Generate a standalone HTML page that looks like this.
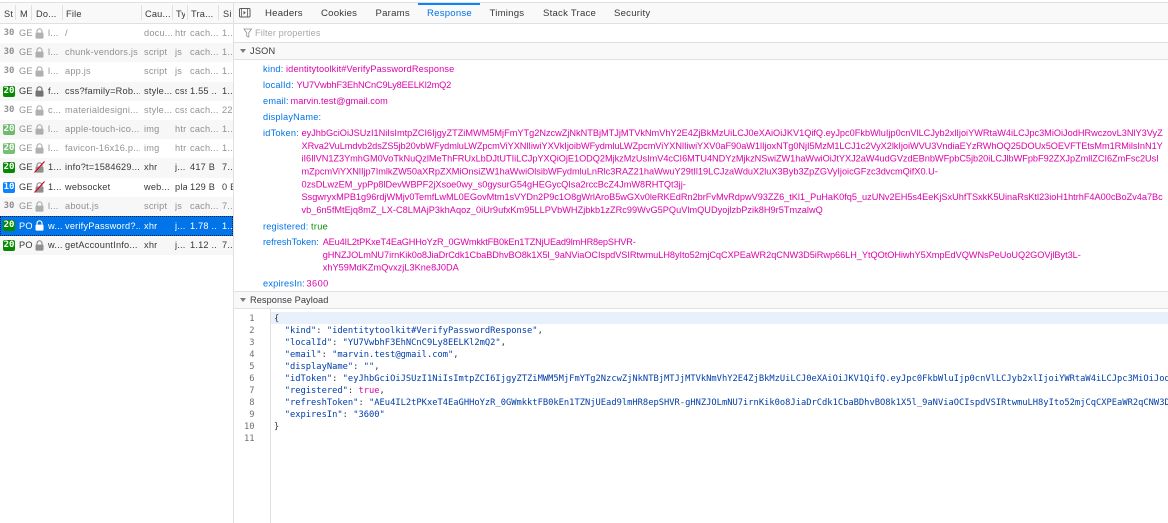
<!DOCTYPE html>
<html><head><meta charset="utf-8"><style>
html,body{margin:0;padding:0;background:#fff;width:1168px;height:523px;overflow:hidden}
#p{position:relative;width:1168px;height:523px;overflow:hidden;font:9.2px/1 "Liberation Sans",sans-serif;letter-spacing:.22px;color:#38383d}
.a{position:absolute}
.b{position:absolute;background:#e0e0e2}
.h{position:absolute;top:8px;white-space:nowrap;overflow:hidden;line-height:12px;color:#38383d}
.r{position:absolute;left:0;width:233px;height:19.2px;line-height:19.2px;white-space:nowrap;color:#38383d}
.r.alt{background:#f7f7f7}
.r.g>span,.r.g>svg{opacity:.55}
.r span{position:absolute;top:0;overflow:hidden;height:19.2px}
.s{left:3px;width:12px;font:bold 9px/11px "DejaVu Sans Mono",monospace;letter-spacing:0;color:#fff;top:4px!important;height:11px!important;text-align:center;border-radius:2px;background:#058b00}
.s.n{background:none;color:#38383d}
.s.i{background:#0a84ff}
.m{left:19px;width:14px}.d{left:48px;width:14px}.f{left:65px;width:75px}.c{left:144px;width:28px}.t{left:175px;width:12px}.x{left:190px;width:28px}.z{left:222px;width:11px}
.l{position:absolute;left:35px;top:4px}
.sel{background:#0074e8;color:#fff;outline:1px dotted #00224f;outline-offset:-1px}
.tab{position:absolute;top:7px;line-height:13px;font-size:9.6px;color:#38383d;white-space:nowrap}
svg text{font-family:"Liberation Sans",sans-serif;font-size:9.2px}
.k{fill:#0074e8}.v{fill:#dd00a9}
.mono text{font-family:"DejaVu Sans Mono",monospace;font-size:8.75px;fill:#003eaa;letter-spacing:0}
</style></head><body><div id="p">

<div class="a" style="left:0;top:3px;width:1168px;height:20px;background:#f9f9fa"></div>
<div class="b" style="left:0;top:2px;width:1168px;height:1px"></div>
<div class="b" style="left:0;top:23px;width:1168px;height:1px"></div>

<div class="h" style="left:4px;width:10px">St</div>
<div class="h" style="left:20px;width:10px">M</div>
<div class="h" style="left:36px;width:24px">Do...</div>
<div class="h" style="left:66px;width:70px">File</div>
<div class="h" style="left:145px;width:25px">Cau...</div>
<div class="h" style="left:176px;width:9px">Ty</div>
<div class="h" style="left:191px;width:25px">Tra...</div>
<div class="h" style="left:223px;width:9px">Si</div>
<div class="b" style="left:15px;top:5px;width:1px;height:15px"></div>
<div class="b" style="left:31px;top:5px;width:1px;height:15px"></div>
<div class="b" style="left:62px;top:5px;width:1px;height:15px"></div>
<div class="b" style="left:141px;top:5px;width:1px;height:15px"></div>
<div class="b" style="left:172px;top:5px;width:1px;height:15px"></div>
<div class="b" style="left:187px;top:5px;width:1px;height:15px"></div>
<div class="b" style="left:218px;top:5px;width:1px;height:15px"></div>

<div class="r g" style="top:24px"><span class="s n">30</span><span class="m">GE</span><svg class="l" width="9" height="11" viewBox="0 0 9 11"><path d="M2 5V3.3a2.5 2.5 0 0 1 5 0V5" fill="none" stroke="#737373" stroke-width="1.2"/><rect x=".5" y="4.6" width="8" height="6" rx="1" fill="#737373"/></svg><span class="d">l...</span><span class="f">/</span><span class="c">docu...</span><span class="t">htr</span><span class="x">cach...</span><span class="z">1...</span></div>
<div class="r g alt" style="top:43.2px"><span class="s n">30</span><span class="m">GE</span><svg class="l" width="9" height="11" viewBox="0 0 9 11"><path d="M2 5V3.3a2.5 2.5 0 0 1 5 0V5" fill="none" stroke="#737373" stroke-width="1.2"/><rect x=".5" y="4.6" width="8" height="6" rx="1" fill="#737373"/></svg><span class="d">l...</span><span class="f">chunk-vendors.js</span><span class="c">script</span><span class="t">js</span><span class="x">cach...</span><span class="z">1...</span></div>
<div class="r g" style="top:62.4px"><span class="s n">30</span><span class="m">GE</span><svg class="l" width="9" height="11" viewBox="0 0 9 11"><path d="M2 5V3.3a2.5 2.5 0 0 1 5 0V5" fill="none" stroke="#737373" stroke-width="1.2"/><rect x=".5" y="4.6" width="8" height="6" rx="1" fill="#737373"/></svg><span class="d">l...</span><span class="f">app.js</span><span class="c">script</span><span class="t">js</span><span class="x">cach...</span><span class="z">1...</span></div>
<div class="r alt" style="top:81.6px"><span class="s">20</span><span class="m">GE</span><svg class="l" width="9" height="11" viewBox="0 0 9 11"><path d="M2 5V3.3a2.5 2.5 0 0 1 5 0V5" fill="none" stroke="#737373" stroke-width="1.2"/><rect x=".5" y="4.6" width="8" height="6" rx="1" fill="#737373"/></svg><span class="d">f...</span><span class="f">css?family=Rob...</span><span class="c">style...</span><span class="t">css</span><span class="x">1.55 ...</span><span class="z">1...</span></div>
<div class="r g" style="top:100.8px"><span class="s n">30</span><span class="m">GE</span><svg class="l" width="9" height="11" viewBox="0 0 9 11"><path d="M2 5V3.3a2.5 2.5 0 0 1 5 0V5" fill="none" stroke="#737373" stroke-width="1.2"/><rect x=".5" y="4.6" width="8" height="6" rx="1" fill="#737373"/></svg><span class="d">c...</span><span class="f">materialdesigni...</span><span class="c">style...</span><span class="t">css</span><span class="x">cach...</span><span class="z">22</span></div>
<div class="r g alt" style="top:120px"><span class="s">20</span><span class="m">GE</span><svg class="l" width="9" height="11" viewBox="0 0 9 11"><path d="M2 5V3.3a2.5 2.5 0 0 1 5 0V5" fill="none" stroke="#737373" stroke-width="1.2"/><rect x=".5" y="4.6" width="8" height="6" rx="1" fill="#737373"/></svg><span class="d">l...</span><span class="f">apple-touch-ico...</span><span class="c">img</span><span class="t">htr</span><span class="x">cach...</span><span class="z">1...</span></div>
<div class="r g" style="top:139.2px"><span class="s">20</span><span class="m">GE</span><svg class="l" width="9" height="11" viewBox="0 0 9 11"><path d="M2 5V3.3a2.5 2.5 0 0 1 5 0V5" fill="none" stroke="#737373" stroke-width="1.2"/><rect x=".5" y="4.6" width="8" height="6" rx="1" fill="#737373"/></svg><span class="d">l...</span><span class="f">favicon-16x16.p...</span><span class="c">img</span><span class="t">htr</span><span class="x">cach...</span><span class="z">1...</span></div>
<div class="r alt" style="top:158.4px"><span class="s">20</span><span class="m">GE</span><svg class="l" width="11" height="12" viewBox="0 0 11 12" style="left:34px;top:3px"><path d="M3 6V4.3a2.5 2.5 0 0 1 5 0V6" fill="none" stroke="#8f8f8f" stroke-width="1.2"/><rect x="1.500" y="5.600" width="8" height="6" rx="1" fill="#8f8f8f"/><path d="M.5 11.500L10.500.5" stroke="#d70022" stroke-width="1.2"/></svg><span class="d">1...</span><span class="f">info?t=1584629...</span><span class="c">xhr</span><span class="t">j...</span><span class="x">417 B</span><span class="z">7...</span></div>
<div class="r" style="top:177.6px"><span class="s i">10</span><span class="m">GE</span><svg class="l" width="11" height="12" viewBox="0 0 11 12" style="left:34px;top:3px"><path d="M3 6V4.3a2.5 2.5 0 0 1 5 0V6" fill="none" stroke="#8f8f8f" stroke-width="1.2"/><rect x="1.500" y="5.600" width="8" height="6" rx="1" fill="#8f8f8f"/><path d="M.5 11.500L10.500.5" stroke="#d70022" stroke-width="1.2"/></svg><span class="d">1...</span><span class="f">websocket</span><span class="c">web...</span><span class="t">pla</span><span class="x">129 B</span><span class="z">0 B</span></div>
<div class="r g alt" style="top:196.8px"><span class="s n">30</span><span class="m">GE</span><svg class="l" width="9" height="11" viewBox="0 0 9 11"><path d="M2 5V3.3a2.5 2.5 0 0 1 5 0V5" fill="none" stroke="#737373" stroke-width="1.2"/><rect x=".5" y="4.6" width="8" height="6" rx="1" fill="#737373"/></svg><span class="d">l...</span><span class="f">about.js</span><span class="c">script</span><span class="t">js</span><span class="x">cach...</span><span class="z">7...</span></div>
<div class="r sel" style="top:216px;height:20px;line-height:20px"><span class="s">20</span><span class="m">PO</span><svg class="l" width="9" height="11" viewBox="0 0 9 11"><path d="M2 5V3.3a2.5 2.5 0 0 1 5 0V5" fill="none" stroke="#fff" stroke-width="1.2"/><rect x=".5" y="4.6" width="8" height="6" rx="1" fill="#fff"/></svg><span class="d">w...</span><span class="f">verifyPassword?...</span><span class="c">xhr</span><span class="t">j...</span><span class="x">1.78 ...</span><span class="z">1...</span></div>
<div class="r alt" style="top:236px;line-height:19px"><span class="s">20</span><span class="m">PO</span><svg class="l" width="9" height="11" viewBox="0 0 9 11"><path d="M2 5V3.3a2.5 2.5 0 0 1 5 0V5" fill="none" stroke="#8f8f8f" stroke-width="1.2"/><rect x=".5" y="4.6" width="8" height="6" rx="1" fill="#8f8f8f"/></svg><span class="d">w...</span><span class="f">getAccountInfo...</span><span class="c">xhr</span><span class="t">j...</span><span class="x">1.12 ...</span><span class="z">7...</span></div>

<div class="b" style="left:233px;top:2px;width:1px;height:521px"></div>

<svg class="a" style="left:239px;top:7px" width="12" height="12" viewBox="0 0 12 12"><rect x=".5" y="1.500" width="10.500" height="8.500" rx="1" fill="none" stroke="#5b5b60"/><path d="M2.500 1.500v8.500M8.500 1.500v8.500" stroke="#5b5b60" stroke-width=".8"/><path d="M4.500 3.700l2.300 2-2.300 2z" fill="#5b5b60"/></svg>
<div class="tab" style="left:265px">Headers</div>
<div class="tab" style="left:321px">Cookies</div>
<div class="tab" style="left:375.500px">Params</div>
<div class="tab" style="left:427px;color:#0074e8">Response</div>
<div class="tab" style="left:489.500px">Timings</div>
<div class="tab" style="left:543px">Stack Trace</div>
<div class="tab" style="left:614px">Security</div>
<div class="a" style="left:418px;top:3px;width:62px;height:2px;background:#0a84ff"></div>

<svg class="a" style="left:243px;top:28px" width="10" height="10" viewBox="0 0 10 10"><path d="M1 1h7.500L5.800 4.800V9L3.700 8V4.800z" fill="none" stroke="#8f8f93" stroke-width=".8"/></svg>
<div class="a" style="left:255px;top:27px;line-height:13px;color:#a8a8ac;letter-spacing:.1px">Filter properties</div>
<div class="b" style="left:234px;top:42px;width:934px;height:1px"></div>
<div class="a" style="left:234px;top:43px;width:934px;height:16px;background:#f9f9fa"></div>
<div class="b" style="left:234px;top:59px;width:934px;height:1px"></div>
<svg class="a" style="left:240px;top:49px" width="7" height="5"><path d="M0 0h6L3 4z" fill="#7a7a7f"/></svg>
<div class="a" style="left:250px;top:45px;line-height:13px">JSON</div>

<svg class="a" style="left:0;top:0" width="1168" height="523">
<text class="k" x="263" y="72.200">kind:</text><text class="v" x="286" y="72.200" textLength="168.500">identitytoolkit#VerifyPasswordResponse</text>
<text class="k" x="263" y="88.200">localId:</text><text class="v" x="296.500" y="88.200" textLength="155">YU7VwbhF3EhNCnC9Ly8EELKl2mQ2</text>
<text class="k" x="263" y="104.200">email:</text><text class="v" x="290.500" y="104.200" textLength="97.500">marvin.test@gmail.com</text>
<text class="k" x="263" y="120.200">displayName:</text>
<text class="k" x="263" y="136.200">idToken:</text>
<text class="v" x="301.500" y="136" textLength="861.500">eyJhbGciOiJSUzI1NiIsImtpZCI6IjgyZTZiMWM5MjFmYTg2NzcwZjNkNTBjMTJjMTVkNmVhY2E4ZjBkMzUiLCJ0eXAiOiJKV1QifQ.eyJpc0FkbWluIjp0cnVlLCJyb2xlIjoiYWRtaW4iLCJpc3MiOiJodHRwczovL3NlY3VyZ</text>
<text class="v" x="301.500" y="149" textLength="861.500">XRva2VuLmdvb2dsZS5jb20vbWFydmluLWZpcmViYXNlIiwiYXVkIjoibWFydmluLWZpcmViYXNlIiwiYXV0aF90aW1lIjoxNTg0NjI5MzM1LCJ1c2VyX2lkIjoiWVU3VndiaEYzRWhOQ25DOUx5OEVFTEtsMm1RMilsInN1Y</text>
<text class="v" x="301.500" y="161.700" textLength="857.500">iI6IlVN1Z3YmhGM0VoTkNuQzlMeThFRUxLbDJtUTIiLCJpYXQiOjE1ODQ2MjkzMzUsImV4cCI6MTU4NDYzMjkzNSwiZW1haWwiOiJtYXJ2aW4udGVzdEBnbWFpbC5jb20iLCJlbWFpbF92ZXJpZmllZCI6ZmFsc2UsI</text>
<text class="v" x="301.500" y="174.500" textLength="636.500">mZpcmViYXNlIjp7ImlkZW50aXRpZXMiOnsiZW1haWwiOlsibWFydmluLnRlc3RAZ21haWwuY29tIl19LCJzaWduX2luX3Byb3ZpZGVyIjoicGFzc3dvcmQifX0.U-</text>
<text class="v" x="301.500" y="187.300" textLength="384.500">0zsDLwzEM_ypPp8lDevWBPF2jXsoe0wy_s0gysurG54gHEGycQIsa2rccBcZ4JmW8RHTQt3jj-</text>
<text class="v" x="301.500" y="200" textLength="861.500">SsgwryxMPB1g96rdjWMjv0TemfLwML0EGovMtm1sVYDn2P9c1O8gWrlAroB5wGXv0leRKEdRn2brFvMvRdpwV93ZZ6_tKl1_PuHaK0fq5_uzUNv2EH5s4EeKjSxUhfTSxkK5UinaRsKtl23ioH1htrhF4A00cBoZv4a7Bc</text>
<text class="v" x="301.500" y="212.800" textLength="521.500">vb_6n5fMtEjq8mZ_LX-C8LMAjP3khAqoz_0iUr9ufxKm95LLPVbWHZjbkb1zZRc99WvG5PQuVlmQUDyojlzbPzik8H9r5TmzalwQ</text>
<text class="k" x="263" y="229.300" textLength="45.500">registered:</text><text x="311" y="229.300" fill="#058b00" textLength="17">true</text>
<text class="k" x="263" y="245" textLength="56">refreshToken:</text>
<text class="v" x="322.700" y="245" textLength="313.300">AEu4IL2tPKxeT4EaGHHoYzR_0GWmkktFB0kEn1TZNjUEad9lmHR8epSHVR-</text>
<text class="v" x="322.700" y="257.800" textLength="758.300">gHNZJOLmNU7irnKik0o8JiaDrCdk1CbaBDhvBO8k1X5l_9aNViaOCIspdVSIRtwmuLH8yIto52mjCqCXPEaWR2qCNW3D5iRwp66LH_YtQOtOHiwhY5XmpEdVQWNsPeUoUQ2GOVjlByt3L-</text>
<text class="v" x="322.700" y="270.500" textLength="136.300">xhY59MdKZmQvxzjL3Kne8J0DA</text>
<text class="k" x="263" y="286.300">expiresIn:</text><text class="v" x="306.500" y="286.300" textLength="22">3600</text>
</svg>

<div class="b" style="left:234px;top:291px;width:934px;height:1px"></div>
<div class="a" style="left:234px;top:292px;width:934px;height:16px;background:#f9f9fa"></div>
<div class="b" style="left:234px;top:308px;width:934px;height:1px"></div>
<svg class="a" style="left:240px;top:298px" width="7" height="5"><path d="M0 0h6L3 4z" fill="#7a7a7f"/></svg>
<div class="a" style="left:250px;top:293.500px;line-height:13px;letter-spacing:.08px">Response Payload</div>

<div class="a" style="left:271px;top:312px;width:897px;height:12px;background:#e8f1fb"></div>
<div class="b" style="left:270px;top:309px;width:1px;height:214px"></div>

<svg class="a mono" style="left:0;top:0" width="1168" height="523">
<g text-anchor="end"><text x="254.500" y="321" style="fill:#6f6f6f">1</text><text x="254.500" y="333" style="fill:#6f6f6f">2</text><text x="254.500" y="345" style="fill:#6f6f6f">3</text><text x="254.500" y="357" style="fill:#6f6f6f">4</text><text x="254.500" y="369" style="fill:#6f6f6f">5</text><text x="254.500" y="381" style="fill:#6f6f6f">6</text><text x="254.500" y="393" style="fill:#6f6f6f">7</text><text x="254.500" y="405" style="fill:#6f6f6f">8</text><text x="254.500" y="417" style="fill:#6f6f6f">9</text><text x="254.500" y="429" style="fill:#6f6f6f">10</text><text x="254.500" y="441" style="fill:#6f6f6f">11</text></g>
<text x="274" y="321" style="fill:#38383d">{</text>
<text x="284.700" y="333">"kind"<tspan style="fill:#38383d">: </tspan>"identitytoolkit#VerifyPasswordResponse"<tspan style="fill:#38383d">,</tspan></text>
<text x="284.700" y="345">"localId"<tspan style="fill:#38383d">: </tspan>"YU7VwbhF3EhNCnC9Ly8EELKl2mQ2"<tspan style="fill:#38383d">,</tspan></text>
<text x="284.700" y="357">"email"<tspan style="fill:#38383d">: </tspan>"marvin.test@gmail.com"<tspan style="fill:#38383d">,</tspan></text>
<text x="284.700" y="369">"displayName"<tspan style="fill:#38383d">: </tspan>""<tspan style="fill:#38383d">,</tspan></text>
<text x="284.700" y="381">"idToken"<tspan style="fill:#38383d">: </tspan>"eyJhbGciOiJSUzI1NiIsImtpZCI6IjgyZTZiMWM5MjFmYTg2NzcwZjNkNTBjMTJjMTVkNmVhY2E4ZjBkMzUiLCJ0eXAiOiJKV1QifQ.eyJpc0FkbWluIjp0cnVlLCJyb2xlIjoiYWRtaW4iLCJpc3MiOiJodHRwczovL3NlY3VyZ</text>
<text x="284.700" y="393">"registered"<tspan style="fill:#38383d">: </tspan><tspan style="fill:#dd00a9">true</tspan><tspan style="fill:#38383d">,</tspan></text>
<text x="284.700" y="405">"refreshToken"<tspan style="fill:#38383d">: </tspan>"AEu4IL2tPKxeT4EaGHHoYzR_0GWmkktFB0kEn1TZNjUEad9lmHR8epSHVR-gHNZJOLmNU7irnKik0o8JiaDrCdk1CbaBDhvBO8k1X5l_9aNViaOCIspdVSIRtwmuLH8yIto52mjCqCXPEaWR2qCNW3D5iRwp66LH</text>
<text x="284.700" y="417">"expiresIn"<tspan style="fill:#38383d">: </tspan>"3600"</text>
<text x="274" y="429" style="fill:#38383d">}</text>
</svg>
</div></body></html>
